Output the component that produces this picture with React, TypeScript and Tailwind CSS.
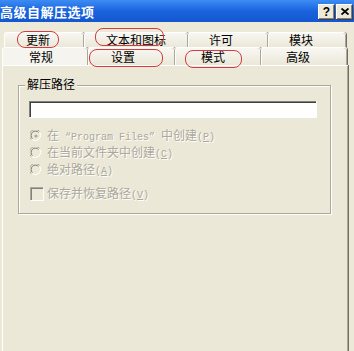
import type { ReactNode } from 'react'

const cjk = "font-['Noto_Sans_CJK_SC','Noto_Sans_CJK_JP',sans-serif]"
const mono = "font-['Liberation_Mono',monospace] text-[10px]"
const disabled = 'text-[#aca899] [text-shadow:1px_1px_0_#ffffff]'

type Tab = { label: string; w: number; pl: number; active?: boolean }

const row1: Tab[] = [
  { label: '更新', w: 80, pl: 21 },
  { label: '文本和图标', w: 104, pl: 21 },
  { label: '许可', w: 80, pl: 20 },
  { label: '模块', w: 78, pl: 20 },
]

const row2: Tab[] = [
  { label: '常规', w: 86, pl: 26, active: true },
  { label: '设置', w: 87, pl: 22 },
  { label: '模式', w: 86, pl: 25 },
  { label: '高级', w: 86, pl: 24 },
]

function TabItem({ tab, h }: { tab: Tab; h: number }) {
  return (
    <div
      className={
        'flex items-center rounded-t-[3px] border-t border-l border-white shadow-[inset_-1px_0_0_#aca899,1px_0_0_#716f64] ' +
        (tab.active ? 'bg-[#f5f4ee]' : 'bg-gradient-to-b from-[#f8f7f2] to-[#ebe8d9]')
      }
      style={{ width: tab.w, height: h, paddingLeft: tab.pl }}
    >
      <span className="leading-none">{tab.label}</span>
    </div>
  )
}

function Radio({ checked }: { checked?: boolean }) {
  return (
    <svg width="12" height="12" viewBox="0 0 12 12" className="shrink-0">
      <circle cx="6" cy="6" r="5.5" fill="#ece9d8" />
      <path d="M1.2 9.5 A5.5 5.5 0 0 1 9.5 1.2" stroke="#aca899" strokeWidth="1" fill="none" />
      <path d="M2.4 8.6 A4.3 4.3 0 0 1 8.6 2.4" stroke="#7f7d72" strokeWidth="1" fill="none" />
      <path d="M9.8 2.2 A5.5 5.5 0 0 1 2.2 9.8" stroke="#ffffff" strokeWidth="1" fill="none" />
      {checked ? <circle cx="6" cy="6" r="1.6" fill="#aca899" /> : null}
    </svg>
  )
}

function Key({ k }: { k: string }) {
  return (
    <span className={mono}>
      (<span className="underline">{k}</span>)
    </span>
  )
}

function OptionRow({ children, checked }: { children: ReactNode; checked?: boolean }) {
  return (
    <div className="flex h-[17px] items-center gap-[5px]">
      <Radio checked={checked} />
      <span className={'whitespace-pre leading-none ' + disabled}>{children}</span>
    </div>
  )
}

function Annotation({ x, y, w, h }: { x: number; y: number; w: number; h: number }) {
  return (
    <div
      className="pointer-events-none absolute rounded-[8px] border border-[#d33b3e]"
      style={{ left: x, top: y, width: w, height: h }}
    />
  )
}

export default function App() {
  return (
    <div className={'relative h-[351px] w-[354px] overflow-hidden bg-[#ece9d8] text-[12px] text-black ' + cjk}>
      <div className="flex h-[22px] items-center justify-between bg-gradient-to-b from-[#3d8cf4] via-[#1a63de] to-[#1457cf] pr-[2px]">
        <span className="text-[13px] font-bold leading-none tracking-[0.5px] text-white">高级自解压选项</span>
        <div className="flex gap-[2px]">
          <div className="flex h-[15px] w-[16px] items-center justify-center border-t border-l border-white bg-[#ece9d8] shadow-[inset_-1px_-1px_0_#808080,1px_1px_0_#404040] font-['Liberation_Sans',sans-serif] text-[12px] font-bold leading-none">
            ?
          </div>
          <div className="flex h-[15px] w-[16px] items-center justify-center border-t border-l border-white bg-[#ece9d8] shadow-[inset_-1px_-1px_0_#808080,1px_1px_0_#404040]">
            <svg width="8" height="7" viewBox="0 0 8 7">
              <path d="M0.5 0.5 L7.5 6.5 M7.5 0.5 L0.5 6.5" stroke="#000" strokeWidth="1.8" />
            </svg>
          </div>
        </div>
      </div>

      <div className="h-[10px]" />
      <div className="ml-[4px] flex h-[15px]">
        {row1.map((t) => (
          <TabItem key={t.label} tab={t} h={15} />
        ))}
      </div>
      <div className="ml-[2px] flex h-[18px]">
        {row2.map((t) => (
          <TabItem key={t.label} tab={t} h={18} />
        ))}
      </div>

      <div className="ml-[2px] h-[300px] w-[346px] border-t border-l border-white bg-[#ebe8d8] pt-[19px] pl-[15px] shadow-[inset_-1px_0_0_#aca899,1px_0_0_#716f64]">
        <div className="relative h-[129px] w-[313px] border border-[#aca899] pt-[15px] pl-[10px] shadow-[inset_1px_1px_0_#ffffff,1px_1px_0_#ffffff]">
          <span className="absolute -top-[8px] left-[6px] bg-[#ebe8d8] px-[2px] leading-none">解压路径</span>
          <div className="h-[16px] w-[287px] border-t border-l border-[#808080] bg-white shadow-[inset_1px_1px_0_#404040,1px_1px_0_#ffffff]" />
          <div className="mt-[10px] pl-[1px]">
            <OptionRow checked>
              {'在'}
              <span className={mono}>{' “Program Files” '}</span>
              {'中创建'}
              <Key k="P" />
            </OptionRow>
            <OptionRow>
              {'在当前文件夹中创建'}
              <Key k="C" />
            </OptionRow>
            <OptionRow>
              {'绝对路径'}
              <Key k="A" />
            </OptionRow>
            <div className="mt-[9px] flex h-[13px] items-center gap-[4px]">
              <div className="h-[13px] w-[13px] shrink-0 border-t border-l border-[#aca899] bg-[#ece9d8] shadow-[inset_1px_1px_0_#808080,1px_1px_0_#ffffff]" />
              <span className={'leading-none ' + disabled}>
                {'保存并恢复路径'}
                <Key k="V" />
              </span>
            </div>
          </div>
        </div>
      </div>

      <Annotation x={17} y={31} w={42} h={17} />
      <Annotation x={95} y={28} w={69} h={18} />
      <Annotation x={89} y={49} w={74} h={18} />
      <Annotation x={185} y={50} w={57} h={18} />
    </div>
  )
}
